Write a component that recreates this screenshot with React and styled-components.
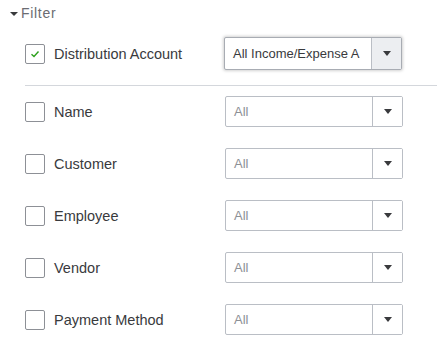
import React from "react"
import styled, { createGlobalStyle } from "styled-components"

const GlobalStyle = createGlobalStyle`
  html, body {
    margin: 0;
    padding: 0;
    background: #fff;
  }
  body {
    font-family: "Liberation Sans", Arial, sans-serif;
    color: #393a3d;
  }
`

const Panel = styled.div`
  width: 437px;
  height: 356px;
  overflow: hidden;
`

const Header = styled.div`
  display: flex;
  align-items: center;
  gap: 3px;
  height: 26px;
  padding-left: 10px;
  font-size: 14px;
  letter-spacing: 0.7px;
  color: #6b6c72;
`

const Caret = styled.span`
  width: 0;
  height: 0;
  border-left: 4px solid transparent;
  border-right: 4px solid transparent;
  border-top: 4px solid #393a3d;
  margin-top: 1px;
`

const Body = styled.div`
  padding-left: 25px;
`

const Row = styled.div`
  display: flex;
  align-items: center;
  height: ${(p) => (p.$tall ? 33 : 31)}px;
  margin-top: ${(p) => p.$top}px;
`

const Check = styled.span`
  box-sizing: border-box;
  width: 20px;
  height: 20px;
  border: 1px solid #8d9096;
  border-radius: 2px;
  display: flex;
  align-items: center;
  justify-content: center;
  flex-shrink: 0;
`

const Label = styled.span`
  width: 171px;
  margin-left: 9px;
  font-size: 14.5px;
  color: #393a3d;
`

const Select = styled.div`
  box-sizing: border-box;
  display: flex;
  width: 178px;
  height: ${(p) => (p.$focused ? 33 : 31)}px;
  border: 1px solid ${(p) => (p.$focused ? "#a8acb3" : "#babec5")};
  border-radius: 2px;
  background: #fff;
  box-shadow: ${(p) => (p.$focused ? "0 0 3px 1px rgba(0,0,0,0.18)" : "none")};
  margin-left: ${(p) => (p.$focused ? -1 : 0)}px;
`

const Value = styled.div`
  flex: 1;
  min-width: 0;
  padding-left: 8px;
  display: flex;
  align-items: center;
  font-size: 13px;
  white-space: nowrap;
  overflow: hidden;
  color: ${(p) => (p.$muted ? "#8d9096" : "#393a3d")};
`

const Toggle = styled.div`
  width: 29px;
  border-left: 1px solid #babec5;
  display: flex;
  align-items: center;
  justify-content: center;
  background: ${(p) => (p.$focused ? "#eceef1" : "#fff")};
`

const Arrow = styled.span`
  width: 0;
  height: 0;
  border-left: 4px solid transparent;
  border-right: 4px solid transparent;
  border-top: 5px solid #393a3d;
`

const Divider = styled.div`
  height: 1px;
  background: #d4d7dc;
  margin-top: 15px;
`

const rows = ["Name", "Customer", "Employee", "Vendor", "Payment Method"]

function Dropdown({ value, focused }) {
  return (
    <Select $focused={focused}>
      <Value $muted={!focused}>{value}</Value>
      <Toggle $focused={focused}>
        <Arrow />
      </Toggle>
    </Select>
  )
}

export default function App() {
  return (
    <Panel>
      <GlobalStyle />
      <Header>
        <Caret />
        Filter
      </Header>
      <Body>
        <Row $tall $top={11}>
          <Check>
            <svg width="10" height="8" viewBox="0 0 10 8">
              <path d="M1.5 4.2 L4 6.5 L8.5 1.5" fill="none" stroke="#2ca01c" strokeWidth="1.4" />
            </svg>
          </Check>
          <Label>Distribution Account</Label>
          <Dropdown value="All Income/Expense A" focused />
        </Row>
        <Divider />
        {rows.map((name, i) => (
          <Row key={name} $top={i === 0 ? 10 : 21}>
            <Check />
            <Label>{name}</Label>
            <Dropdown value="All" />
          </Row>
        ))}
      </Body>
    </Panel>
  )
}
